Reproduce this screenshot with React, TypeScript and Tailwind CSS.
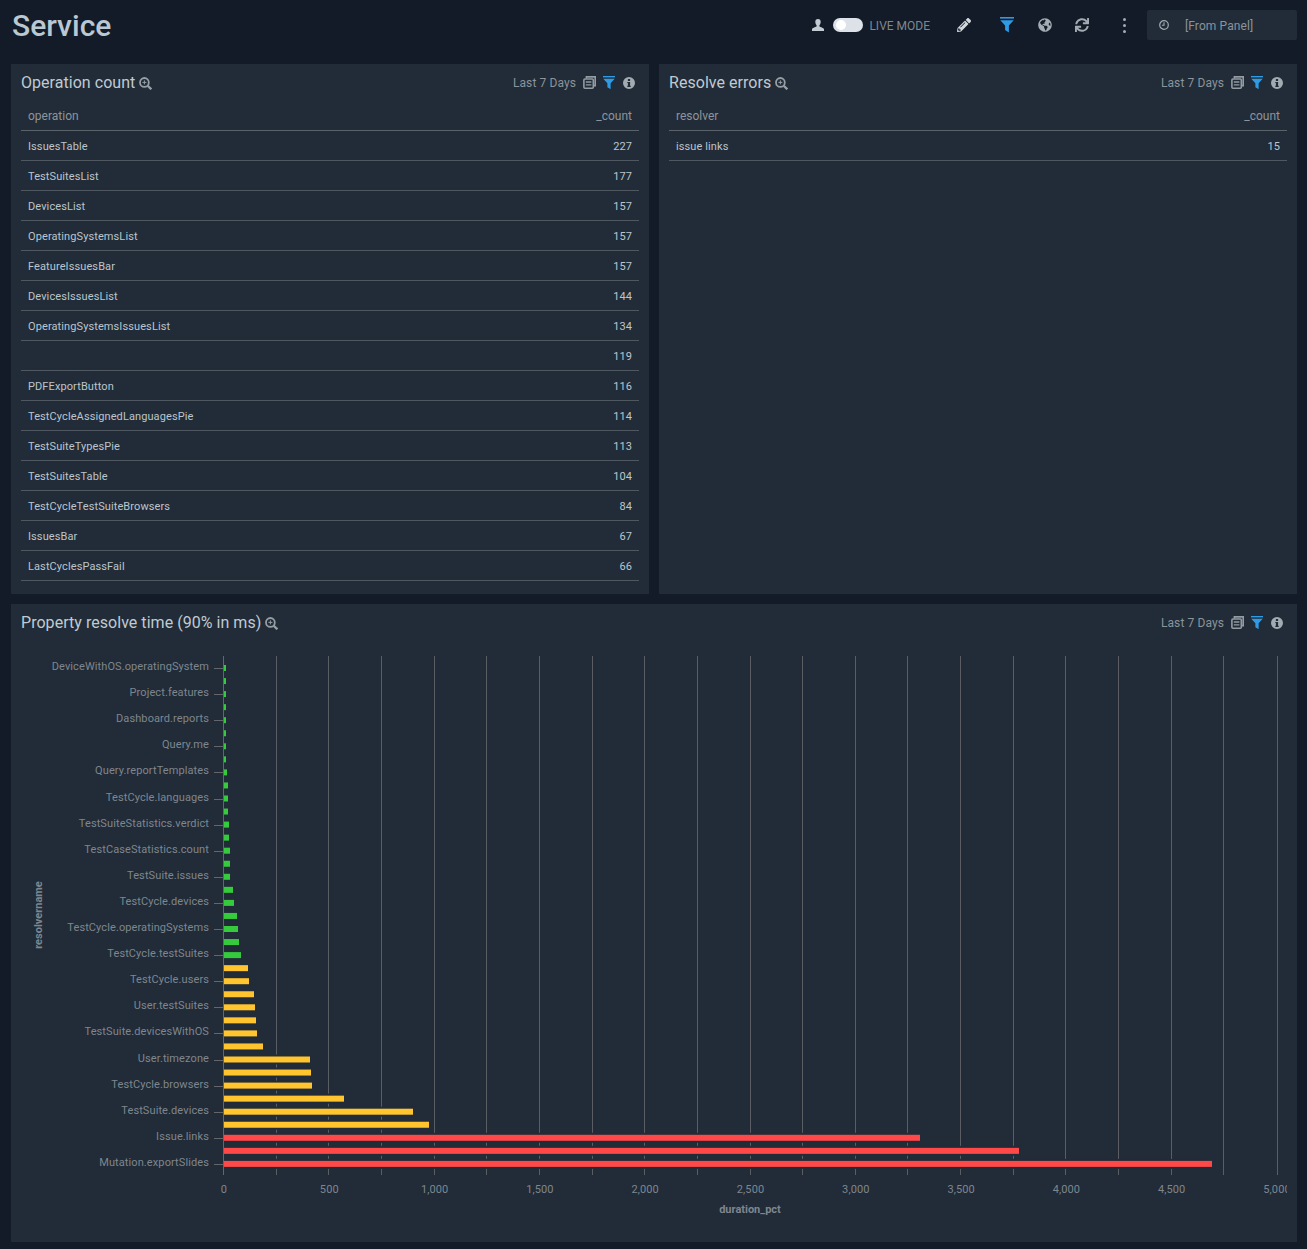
import React from "react";
import { FaPencilAlt, FaGlobeAmericas, FaSync } from "react-icons/fa";

const op: [string, string][] = [
  ["IssuesTable", "227"],
  ["TestSuitesList", "177"],
  ["DevicesList", "157"],
  ["OperatingSystemsList", "157"],
  ["FeatureIssuesBar", "157"],
  ["DevicesIssuesList", "144"],
  ["OperatingSystemsIssuesList", "134"],
  ["", "119"],
  ["PDFExportButton", "116"],
  ["TestCycleAssignedLanguagesPie", "114"],
  ["TestSuiteTypesPie", "113"],
  ["TestSuitesTable", "104"],
  ["TestCycleTestSuiteBrowsers", "84"],
  ["IssuesBar", "67"],
  ["LastCyclesPassFail", "66"],
];

const labels = [
  "DeviceWithOS.operatingSystem", "Project.features", "Dashboard.reports", "Query.me",
  "Query.reportTemplates", "TestCycle.languages", "TestSuiteStatistics.verdict", "TestCaseStatistics.count",
  "TestSuite.issues", "TestCycle.devices", "TestCycle.operatingSystems", "TestCycle.testSuites",
  "TestCycle.users", "User.testSuites", "TestSuite.devicesWithOS", "User.timezone",
  "TestCycle.browsers", "TestSuite.devices", "Issue.links", "Mutation.exportSlides",
];

const widths = [2, 2, 2, 2, 2, 2, 2, 2, 3, 4, 4, 4, 5, 5, 6, 6, 6, 9, 10, 13, 14, 15, 17, 24, 25, 30, 31, 32, 33, 39, 86, 87, 88, 120, 189, 205, 696, 795, 988];

const grid = [276, 328, 381, 434, 486, 539, 592, 644, 697, 750, 802, 855, 907, 960, 1013, 1065, 1118, 1171, 1223, 1277];

const PANEL = "#212c38";

function FilterIcon({ size = 12 }: { size?: number }) {
  return (
    <svg width={size} height={size * 1.1} viewBox="0 0 14 15.4" className="shrink-0">
      <rect x="0" y="0" width="14" height="1.6" fill="#2f9be4" />
      <path d="M0.3 3.2H13.7L8.9 8.4V15.4L5.1 13V8.4Z" fill="#2f9be4" />
    </svg>
  );
}

function CloneIcon() {
  return (
    <svg width="13" height="13" viewBox="0 0 13 13" fill="none" stroke="#939ba3" strokeWidth="1.6" className="shrink-0">
      <path d="M3.4 2.6V.9H12.2V9.6H10.5" />
      <rect x="0.9" y="3" width="9.4" height="9.2" rx="1" />
      <path d="M2.8 6H8.4M2.8 8.9H8.4" strokeWidth="1.3" />
    </svg>
  );
}

function InfoIcon() {
  return (
    <svg width="12" height="12" viewBox="0 0 12 12" className="shrink-0">
      <path
        fillRule="evenodd"
        fill="#a3abb2"
        d="M6 0A6 6 0 1 1 6 12A6 6 0 1 1 6 0ZM4.9 2.1V3.9H7.1V2.1ZM4.3 5V6.1H4.9V8.7H4.3V9.9H7.7V8.7H7.1V5Z"
      />
    </svg>
  );
}

function ZoomIcon() {
  return (
    <svg width="13" height="13" viewBox="0 0 13 13" fill="none" stroke="#969ea6" className="shrink-0">
      <circle cx="5.4" cy="5.4" r="4.4" strokeWidth="1.8" />
      <path d="M8.7 8.7L12.3 12.3" strokeWidth="2.3" />
      <path d="M3.4 5.4H7.4M5.4 3.4V7.4" strokeWidth="1" />
    </svg>
  );
}

function UserIcon() {
  return (
    <svg width="12" height="12" viewBox="0 0 12 12" fill="#c3cbd2" className="shrink-0">
      <path d="M6 0C7.8 0 8.8 1.3 8.7 3C8.6 4.4 8 5.6 7.4 6.2V7.2C7.4 7.9 11.2 8.4 12 10V12H0V10C.8 8.4 4.6 7.9 4.6 7.2V6.2C4 5.6 3.4 4.4 3.3 3C3.2 1.3 4.2 0 6 0Z" />
    </svg>
  );
}

function ClockIcon() {
  return (
    <svg width="10" height="10" viewBox="0 0 10 10" fill="none" stroke="#a2aab2" className="shrink-0">
      <circle cx="5" cy="5" r="4.3" strokeWidth="1.2" />
      <path d="M5 2.2V5.3H2.9" strokeWidth="1.1" />
    </svg>
  );
}

function PanelHeader({ title }: { title: string }) {
  return (
    <div className="flex h-[37px] items-center justify-between pl-[10px] pr-[14px]">
      <div className="flex items-center gap-[4px]">
        <span className="text-[16px] tracking-[0.04px] text-[#c0cad3]">{title}</span>
        <span className="mt-[2px]"><ZoomIcon /></span>
      </div>
      <div className="flex items-center">
        <span className="mt-[1px] text-[12px] tracking-[0.1px] text-[#8b939b]">Last 7 Days</span>
        <span className="ml-[7px]"><CloneIcon /></span>
        <span className="ml-[7px]"><FilterIcon /></span>
        <span className="ml-[8px]"><InfoIcon /></span>
      </div>
    </div>
  );
}

function DataTable({ head, rows }: { head: string; rows: [string, string][] }) {
  return (
    <div className="mx-[10px]">
      <div className="flex h-[30px] items-center justify-between border-b border-[#5a626a] px-[7px] text-[12px] text-[#8d949c]">
        <span>{head}</span>
        <span>_count</span>
      </div>
      {rows.map((r, i) => (
        <div key={i} className="flex h-[30px] items-center justify-between border-b border-[#4f5760] px-[7px] pt-[4px] text-[11px] tracking-[0.1px] text-[#bcc5cd]">
          <span>{r[0]}</span>
          <span>{r[1]}</span>
        </div>
      ))}
    </div>
  );
}

function Chart() {
  const color = (i: number) => (i >= 36 ? "#ff4848" : i >= 23 ? "#ffc42e" : "#35cb3c");
  const y = (i: number) => 665 + 13.05 * i;
  return (
    <svg width="1266" height="590" viewBox="21 641 1266 590" className="block">
      {grid.map((x) => (
        <line key={x} x1={x + 0.5} x2={x + 0.5} y1="656" y2="1175" stroke="#5a5e62" strokeWidth="1" />
      ))}
      {widths.map((w, i) => (
        <rect key={i} x="224" y={y(i) - 2} width={w + 2} height="10" fill={PANEL} />
      ))}
      {widths.map((w, i) => (
        <rect key={i} x="224" y={y(i)} width={w} height="6" fill={color(i)} />
      ))}
      <line x1="223.5" x2="223.5" y1="656" y2="1175" stroke="#63676b" />
      {labels.map((l, i) => {
        const ty = Math.round(y(i * 2) + 3) + 0.5;
        return (
          <g key={l}>
            <line x1="214" x2="223" y1={ty} y2={ty} stroke="#63676b" />
            <text x="209" y={ty + 1.5} textAnchor="end" fontSize="11" letterSpacing="0.1" fill="#7f868e">{l}</text>
          </g>
        );
      })}
      {Array.from({ length: 11 }, (_, i) => (
        <text key={i} x={224 + 105.3 * i} y="1193" textAnchor="middle" fontSize="11" letterSpacing="0.1" fill="#7f868e">
          {(i * 500).toLocaleString("en-US")}
        </text>
      ))}
      <text x="750" y="1213" textAnchor="middle" fontSize="11" fontWeight="700" fill="#7f868e">duration_pct</text>
      <text transform="translate(42 915) rotate(-90)" textAnchor="middle" fontSize="11" fontWeight="700" fill="#7f868e">resolvername</text>
    </svg>
  );
}

export default function App() {
  return (
    <div className="min-h-[1249px] bg-[#121b27] pr-[10px] pl-[11px] pb-[7px] font-['Roboto','Liberation_Sans',sans-serif]">
      <header className="flex h-[64px] items-start justify-between">
        <h1 className="mt-[7px] ml-[1px] text-[30px] leading-[38px] font-medium text-[#b9c8d3]">Service</h1>
        <div className="mt-[10px] flex h-[30px] items-center">
          <UserIcon />
          <div className="ml-[9px] flex h-[14px] w-[30px] items-center rounded-full bg-[#dce2e7] pl-[3px]">
            <div className="h-[10px] w-[10px] rounded-full bg-white" />
          </div>
          <span className="mt-[1px] ml-[6px] text-[12px] text-[#7f8890]">LIVE MODE</span>
          <span className="ml-[27px] text-[#d3d8dd]"><FaPencilAlt size={14} /></span>
          <span className="ml-[29px]"><FilterIcon size={14} /></span>
          <span className="ml-[24px] text-[#a3abb3]"><FaGlobeAmericas size={14} /></span>
          <span className="ml-[23px] text-[#a3abb3]"><FaSync size={14} /></span>
          <div className="ml-[34px] flex flex-col gap-[3px]">
            <span className="h-[3px] w-[3px] rounded-full bg-[#a3abb3]" />
            <span className="h-[3px] w-[3px] rounded-full bg-[#a3abb3]" />
            <span className="h-[3px] w-[3px] rounded-full bg-[#a3abb3]" />
          </div>
          <div className="ml-[21px] flex h-[30px] w-[150px] items-center rounded-[2px] bg-[#212c38] pl-[12px]">
            <ClockIcon />
            <span className="mt-[1px] ml-[16px] text-[12px] tracking-[0.1px] text-[#8b939b]">[From Panel]</span>
          </div>
        </div>
      </header>
      <div className="grid grid-cols-2 gap-[10px]">
        <section className="h-[530px] bg-[#212c38]">
          <PanelHeader title="Operation count" />
          <DataTable head="operation" rows={op} />
        </section>
        <section className="h-[530px] bg-[#212c38]">
          <PanelHeader title="Resolve errors" />
          <DataTable head="resolver" rows={[["issue links", "15"]]} />
        </section>
      </div>
      <section className="mt-[10px] h-[638px] bg-[#212c38]">
        <PanelHeader title="Property resolve time (90% in ms)" />
        <div className="pl-[10px]"><Chart /></div>
      </section>
    </div>
  );
}
